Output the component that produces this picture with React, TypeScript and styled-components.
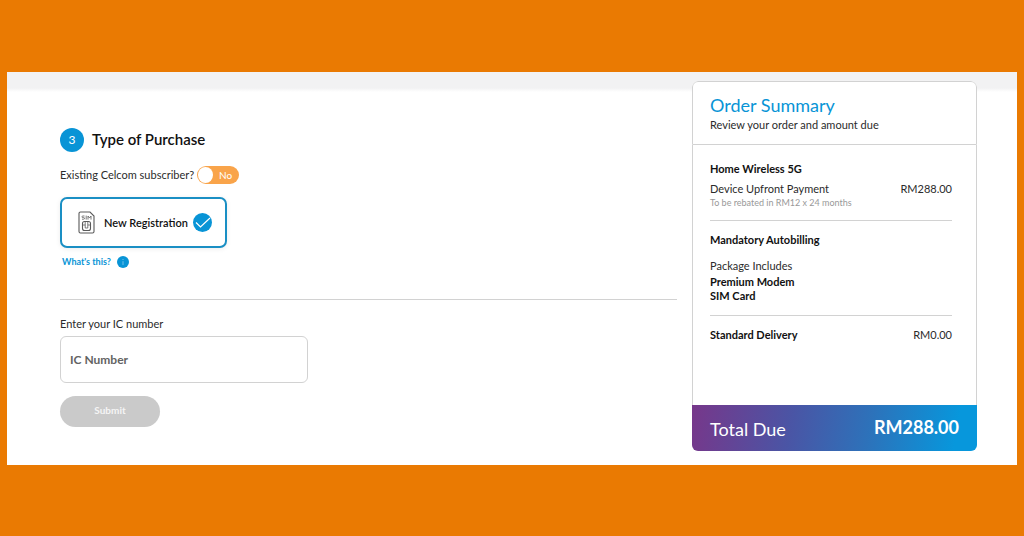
import React, { useState } from 'react';
import styled, { createGlobalStyle } from 'styled-components';

const blue = '#0894d6';
const line = '#d2d2d2';

const GlobalStyle = createGlobalStyle`
  *, *::before, *::after { box-sizing: border-box; }
  body {
    margin: 0;
    background: #ea7a02;
    color: #2b2b2b;
    font-family: Lato, "Liberation Sans", sans-serif;
    font-size: 11px;
    line-height: 14px;
  }
  h1, h2, h3, p, ul { margin: 0; padding: 0; }
  input, button { font-family: inherit; margin: 0; }
`;

const Page = styled.div`
  padding: 72px 7px 71px;
`;

const Panel = styled.main`
  display: grid;
  grid-template-columns: minmax(0, 1fr) 285px;
  column-gap: 15px;
  align-items: start;
  padding: 9px 40px 14px 53px;
  background: linear-gradient(#f2f2f3 0 16px, #fff 20px);
`;

const Form = styled.form`
  display: flex;
  flex-direction: column;
  align-items: flex-start;
  padding-top: 47px;
`;

const StepHeader = styled.header`
  display: flex;
  align-items: center;
  gap: 8px;
`;

const StepNumber = styled.span`
  display: grid;
  place-items: center;
  width: 24px;
  height: 24px;
  border-radius: 50%;
  background: ${blue};
  color: #fff;
  font-size: 12px;
`;

const StepTitle = styled.h1`
  color: #111;
  font-size: 15px;
  font-weight: 600;
  line-height: 22px;
  padding-bottom: 2px;
`;

const SwitchRow = styled.label`
  display: flex;
  align-items: center;
  gap: 3px;
  margin-top: 14px;
`;

const HiddenInput = styled.input`
  position: absolute;
  inset: 0;
  width: 100%;
  height: 100%;
  opacity: 0;
  cursor: pointer;
`;

const Track = styled.span<{ $on: boolean }>`
  position: relative;
  display: flex;
  flex-direction: ${(p) => (p.$on ? 'row-reverse' : 'row')};
  align-items: center;
  justify-content: space-between;
  width: 42px;
  height: 18px;
  padding: 0 1px;
  border-radius: 9px;
  background: ${(p) => (p.$on ? blue : '#f9a44a')};
  color: #fff;
  font-size: 10px;
`;

const Knob = styled.span`
  width: 16px;
  height: 16px;
  border-radius: 50%;
  background: #fff;
`;

const TrackText = styled.span`
  padding: 0 6px;
`;

const Option = styled.label`
  position: relative;
  display: flex;
  align-items: center;
  width: 167px;
  height: 51px;
  margin-top: 13px;
  padding: 0 13px 0 16px;
  border: 2px solid #1a8fc4;
  border-radius: 7px;
  background: #fff;
  box-shadow: 0 1px 5px rgba(0, 0, 0, 0.08);
  color: #111;
`;

const OptionText = styled.span`
  flex: 1;
  padding-left: 9px;
  font-weight: 600;
`;

const HelpLink = styled.a`
  display: flex;
  align-items: center;
  gap: 6px;
  margin: 7px 0 0 2px;
  color: ${blue};
  font-size: 9px;
  font-weight: 700;
  text-decoration: none;
`;

const Divider = styled.hr<{ $top: number; $bottom: number }>`
  align-self: stretch;
  width: 100%;
  height: 1px;
  margin: ${(p) => p.$top}px 0 ${(p) => p.$bottom}px;
  border: 0;
  background: ${line};
`;

const Field = styled.input`
  width: 248px;
  height: 47px;
  margin-top: 5px;
  padding: 0 9px;
  border: 1px solid ${line};
  border-radius: 6px;
  background: #fff;
  color: #333;
  font-size: 12px;
  font-weight: 700;
  &::placeholder { color: #636363; opacity: 1; }
`;

const Submit = styled.button`
  width: 100px;
  height: 31px;
  margin-top: 13px;
  padding: 0 0 4px;
  border: 0;
  border-radius: 16px;
  background: #cacaca;
  color: #f5f5f5;
  font-size: 10px;
  font-weight: 700;
`;

const Summary = styled.aside`
  display: flex;
  flex-direction: column;
  min-height: 370px;
  border-radius: 6px;
  background: #fff;
  overflow: hidden;
`;

const SummaryTop = styled.header`
  padding: 11px 17px 12px;
  border: 1px solid ${line};
  border-radius: 6px 6px 0 0;
`;

const SummaryTitle = styled.h2`
  color: ${blue};
  font-size: 18px;
  font-weight: 400;
  line-height: 24px;
  padding-bottom: 1px;
`;

const SummaryBody = styled.div`
  flex: 1;
  padding: 17px 24px 0 17px;
  border: solid ${line};
  border-width: 0 1px;
`;

const Strong = styled.h3`
  color: #111;
  font-size: 11px;
  font-weight: 700;
  line-height: 14px;
`;

const Row = styled.div<{ $top?: number }>`
  display: flex;
  justify-content: space-between;
  margin-top: ${(p) => p.$top ?? 0}px;
`;

const Note = styled.p`
  color: #999;
  font-size: 9px;
  line-height: 13px;
`;

const PackageLabel = styled.p`
  margin: 12px 0 2px;
`;

const PackageList = styled.ul`
  list-style: none;
  color: #111;
  font-weight: 700;
`;

const Total = styled.footer`
  display: flex;
  justify-content: space-between;
  align-items: center;
  height: 46px;
  padding: 2px 18px 0;
  background: linear-gradient(100deg, #77378a, #4a55a5 35%, #2d72ba 62%, #0797dc 92%);
  color: #fff;
  font-size: 18px;
  line-height: 24px;
`;

const TotalAmount = styled.strong`
  font-weight: 700;
  padding-bottom: 4px;
`;

const SimIcon = () => (
  <svg width="17" height="23" viewBox="0 0 17 23" fill="none" stroke="#5a5a5a" aria-hidden="true">
    <path d="M2.500 1h9.500L16 5v15.500a1.500 1.500 0 0 1-1.500 1.500h-12A1.500 1.500 0 0 1 1 20.500v-18A1.500 1.500 0 0 1 2.500 1Z" strokeWidth="1.100" />
    <path d="M6.500 5H4.800q-.8 0-.8.800t.8.800h.9q.8 0 .8.800t-.8.800H4M8.200 4.600v4M10 8.600V5l1.500 2L13 5v3.600" strokeWidth=".8" />
    <rect x="4.500" y="10.500" width="8" height="9" rx="2" strokeWidth="1.100" />
    <path d="M7.200 10.500v6.500M9.800 10.500v6.500M4.500 14h2.700M9.800 14h2.700M7.200 17h2.600" strokeWidth=".8" />
  </svg>
);

const CheckIcon = () => (
  <svg width="19" height="19" viewBox="0 0 19 19" fill="none" aria-hidden="true">
    <circle cx="9.500" cy="9.500" r="9.500" fill={blue} />
    <path d="m3 9.500 4.500 4.500L17 5" stroke="#fff" strokeWidth="1.200" />
  </svg>
);

const InfoIcon = () => (
  <svg width="12" height="12" viewBox="0 0 12 12" aria-hidden="true">
    <circle cx="6" cy="6" r="6" fill={blue} />
    <path d="M6 3v1M6 5.200V9" stroke="#6fc0ea" strokeWidth="1" />
  </svg>
);

export default function App() {
  const [existing, setExisting] = useState(false);
  const [ic, setIc] = useState('');

  return (
    <Page>
      <GlobalStyle />
      <Panel>
        <Form onSubmit={(e) => e.preventDefault()}>
          <StepHeader>
            <StepNumber>3</StepNumber>
            <StepTitle>Type of Purchase</StepTitle>
          </StepHeader>
          <SwitchRow>
            Existing Celcom subscriber?
            <Track $on={existing}>
              <HiddenInput
                type="checkbox"
                role="switch"
                checked={existing}
                onChange={(e) => setExisting(e.target.checked)}
              />
              <Knob />
              <TrackText>{existing ? 'Yes' : 'No'}</TrackText>
            </Track>
          </SwitchRow>
          <Option>
            <HiddenInput type="radio" name="purchase" defaultChecked />
            <SimIcon />
            <OptionText>New Registration</OptionText>
            <CheckIcon />
          </Option>
          <HelpLink href="#help">
            What's this?
            <InfoIcon />
          </HelpLink>
          <Divider $top={30} $bottom={17} />
          <label htmlFor="ic">Enter your IC number</label>
          <Field id="ic" placeholder="IC Number" value={ic} onChange={(e) => setIc(e.target.value)} />
          <Submit type="submit">Submit</Submit>
        </Form>

        <Summary>
          <SummaryTop>
            <SummaryTitle>Order Summary</SummaryTitle>
            <p>Review your order and amount due</p>
          </SummaryTop>
          <SummaryBody>
            <Strong>Home Wireless 5G</Strong>
            <Row $top={6}>
              <span>Device Upfront Payment</span>
              <span>RM288.00</span>
            </Row>
            <Note>To be rebated in RM12 x 24 months</Note>
            <Divider $top={11} $bottom={12} />
            <Strong>Mandatory Autobilling</Strong>
            <PackageLabel>Package Includes</PackageLabel>
            <PackageList>
              <li>Premium Modem</li>
              <li>SIM Card</li>
            </PackageList>
            <Divider $top={12} $bottom={12} />
            <Row>
              <Strong>Standard Delivery</Strong>
              <span>RM0.00</span>
            </Row>
          </SummaryBody>
          <Total>
            <span>Total Due</span>
            <TotalAmount>RM288.00</TotalAmount>
          </Total>
        </Summary>
      </Panel>
    </Page>
  );
}
